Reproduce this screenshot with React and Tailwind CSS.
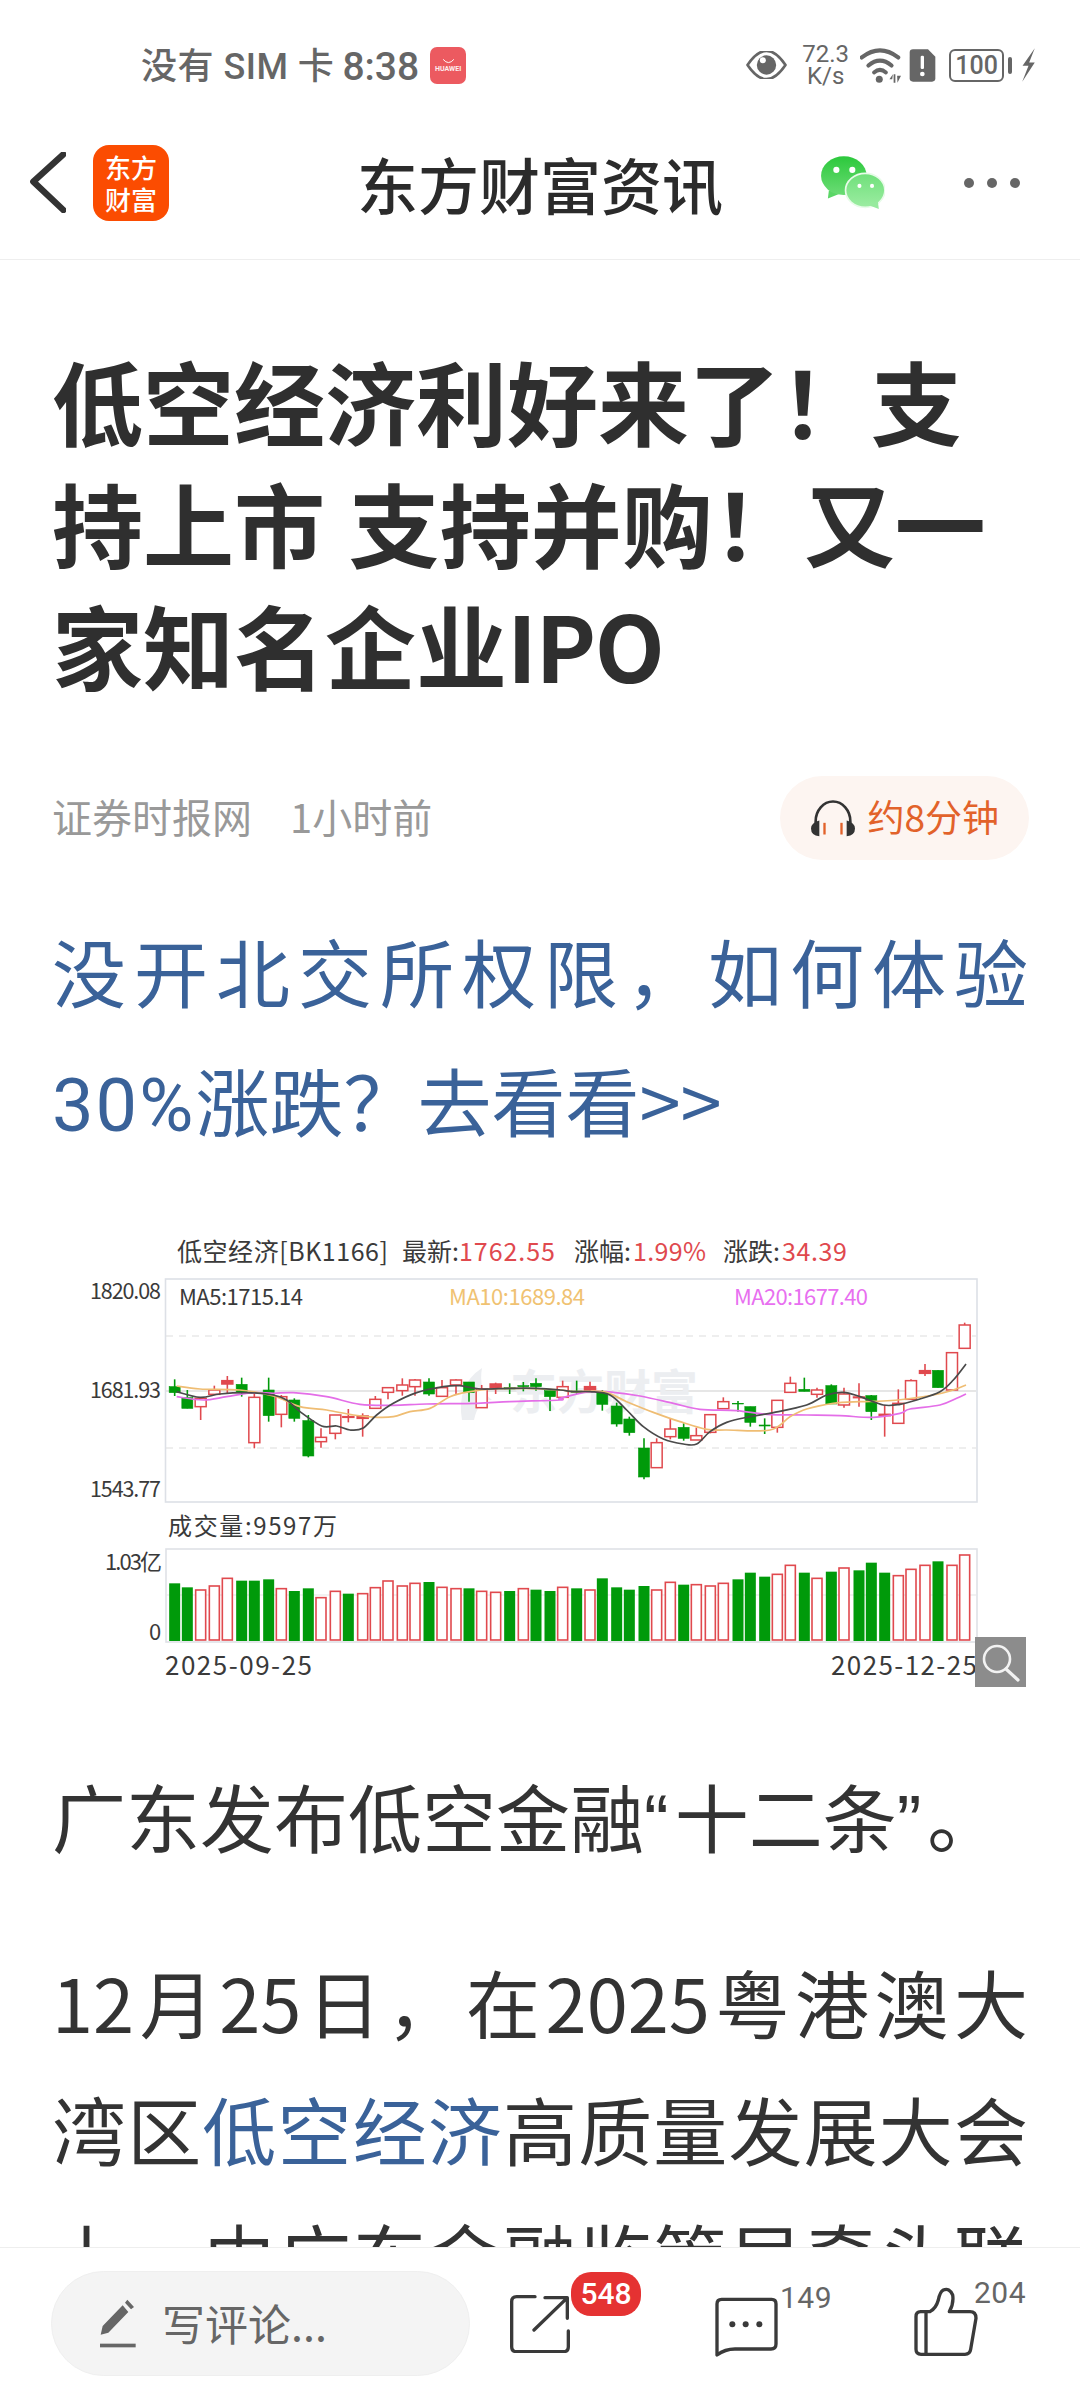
import React from "react";

const CJK = { fontFamily: '"Noto Sans CJK SC", sans-serif' };
const UI = '"Roboto", "Noto Sans CJK SC", sans-serif';
const BANG = "\uFF01";
const COMMA = "\uFF0C";
const QM = "\uFF1F";

// candle data in zoom-crop pixels: [x, bodyTop, bodyBottom, wickTop, wickBottom, colour]
const left = [
  [344,500,518,478,528,"g"],[382,533,565,510,565,"g"],[422,535,560,535,600,"r"],[463,510,523,497,523,"r"],[502,482,492,468,520,"r"],
  [545,493,517,473,530,"g"],[583,532,668,520,685,"r"],[626,510,587,473,605,"g"],[664,530,583,525,622,"r"],[703,540,595,535,605,"g"],
  [745,602,708,585,712,"g"],[783,652,665,625,683,"r"],[826,585,640,585,658,"r"],[865,590,592,567,607,"r"],[908,588,595,580,650,"r"],
  [946,538,565,528,565,"r"],[984,503,517,503,538,"r"],[1027,495,512,475,527,"r"],[1065,480,500,477,527,"r"],[1107,486,522,475,527,"g"],
  [1146,503,529,480,529,"r"],[1188,480,495,478,525,"r"],[1227,486,518,486,545,"g"],[1265,507,563,495,563,"r"],[1307,492,503,488,522,"r"],
  [1349,503,507,490,522,"g"],[1390,497,500,486,514,"g"],[1428,490,500,475,512,"g"],[1470,512,530,512,573,"g"],[1508,500,532,482,540,"r"],
];
const right = [
  [110,513,517,482,522,"g"],[150,500,510,485,515,"r"],[187,515,553,510,572,"g"],[230,558,612,548,620,"g"],[268,597,638,590,647,"g"],
  [312,684,771,655,778,"g"],[350,668,743,655,743,"r"],[391,627,650,597,658,"r"],[431,622,655,610,662,"g"],[469,647,660,623,660,"r"],
  [511,584,637,584,640,"r"],[550,545,566,532,566,"r"],[594,550,552,543,575,"g"],[631,560,607,560,620,"g"],[674,615,618,595,642,"g"],
  [712,541,622,541,638,"r"],[751,490,517,470,517,"r"],[793,508,514,473,514,"g"],[831,510,523,503,533,"r"],[874,497,552,493,552,"g"],
  [912,522,555,503,563,"r"],[957,531,533,490,560,"r"],[994,527,575,525,600,"g"],[1034,583,587,555,650,"r"],[1075,550,610,508,610,"r"],
  [1113,482,538,478,538,"r"],[1155,452,460,432,468,"r"],[1194,451,503,451,503,"g"],[1236,398,510,398,510,"r"],[1274,315,385,308,385,"r"],
];
const candles = [
  ...left.map((c) => [60 + c[0] / 3, ...c.slice(1)]),
  ...right.map((c) => [540 + c[0] / 3, ...c.slice(1)]),
];
const Y = (v) => 1220 + v / 3;

const vols = [
  [190,"g"],[202,"g"],[210,"r"],[198,"r"],[175,"r"],[182,"g"],[182,"g"],[178,"g"],[206,"r"],[213,"g"],
  [205,"g"],[233,"r"],[214,"r"],[221,"g"],[221,"r"],[203,"r"],[183,"r"],[198,"r"],[190,"r"],[186,"g"],
  [202,"r"],[206,"r"],[205,"g"],[214,"r"],[217,"r"],[213,"g"],[206,"r"],[209,"g"],[213,"g"],[202,"r"],
  [205,"g"],[210,"r"],[175,"g"],[202,"g"],[209,"g"],[198,"g"],[210,"r"],[187,"r"],[194,"g"],[194,"r"],
  [198,"r"],[190,"r"],[178,"g"],[158,"g"],[170,"g"],[163,"r"],[136,"r"],[158,"g"],[175,"r"],[155,"g"],
  [144,"r"],[151,"g"],[128,"g"],[158,"g"],[167,"r"],[148,"r"],[136,"r"],[124,"g"],[136,"r"],[105,"r"],
];

const L = (pts) => pts.map(([x, y]) => [60 + x / 3, Y(y)]);
const R = (pts) => pts.map(([x, y]) => [540 + x / 3, Y(y)]);
const ma5 = [...L([[350,515],[420,532],[480,522],[560,518],[640,525],[680,540],[720,575],[785,618],[830,618],[870,630],[908,625],[950,585],[1000,550],[1070,518],[1150,500],[1200,497],[1260,507],[1350,505],[1430,505],[1500,510]]),
  ...R([[100,515],[150,515],[210,525],[260,570],[310,620],[370,657],[430,672],[470,672],[510,635],[560,607],[630,590],[700,578],[800,555],[860,525],[910,517],[960,530],[1030,555],[1080,553],[1130,540],[1200,515],[1240,480],[1278,432]])];
const ma10 = [...L([[350,498],[420,507],[540,510],[640,528],[720,560],[800,570],[880,585],[950,592],[1000,590],[1050,575],[1110,565],[1170,530],[1230,515],[1300,507],[1400,505],[1500,510]]),
  ...R([[100,515],[190,515],[260,545],[340,577],[420,605],[500,628],[560,630],[690,630],[750,590],[800,567],[880,550],[960,545],[1030,543],[1100,537],[1180,525],[1230,513],[1278,495]])];
const ma20 = [...L([[350,530],[430,540],[500,530],[580,518],[640,520],[700,518],[800,530],[900,553],[1000,556],[1100,552],[1250,550],[1350,545],[1500,540]]),
  ...R([[60,535],[150,515],[220,517],[300,528],[400,550],[480,568],[590,572],[680,583],[800,585],[900,587],[1000,592],[1080,580],[1110,567],[1200,555],[1250,535],[1278,522]])];

function smooth(p) {
  let d = `M${p[0][0]} ${p[0][1]}`;
  for (let i = 0; i < p.length - 1; i++) {
    const a = p[Math.max(i - 1, 0)], b = p[i], c = p[i + 1], e = p[Math.min(i + 2, p.length - 1)];
    d += ` C${b[0] + (c[0] - a[0]) / 6} ${b[1] + (c[1] - a[1]) / 6} ${c[0] - (e[0] - b[0]) / 6} ${c[1] - (e[1] - b[1]) / 6} ${c[0]} ${c[1]}`;
  }
  return d;
}

const RED = "#e0494e";
const GREEN = "#009a0a";
const INK = "#3a3a3a";

function T({ x, y, c = INK, s = 24, w, children }) {
  return (
    <text x={x} y={y} fill={c} fontSize={s} textLength={w} lengthAdjust={w ? "spacing" : undefined} dominantBaseline="central" fontFamily='"Noto Sans CJK SC", sans-serif'>{children}</text>
  );
}

function Chart() {
  return (
    <svg className="block -mx-[52px] mt-[67px]" width="1080" height="460" viewBox="0 1230 1080 460">
      <T x={177} y={1250} s={25} w={211}>低空经济[BK1166]</T>
      <T x={402} y={1250} s={25}>最新:</T>
      <T x={459} y={1250} s={25} c={RED} w={96}>1762.55</T>
      <T x={574} y={1250} s={25}>涨幅:</T>
      <T x={633} y={1250} s={25} c={RED} w={73}>1.99%</T>
      <T x={723} y={1250} s={25}>涨跌:</T>
      <T x={782} y={1250} s={25} c={RED} w={65}>34.39</T>

      <rect x="165.5" y="1279" width="811.5" height="223" fill="#fff" stroke="#dde0e6" strokeWidth="1.6" />
      <line x1="166" x2="976" y1="1336" y2="1336" stroke="#dedede" strokeWidth="1.2" strokeDasharray="7 6" />
      <line x1="166" x2="976" y1="1448" y2="1448" stroke="#dedede" strokeWidth="1.2" strokeDasharray="7 6" />
      <line x1="166" x2="976" y1="1391" y2="1391" stroke="#dedede" strokeWidth="1.4" />

      <text x="510" y="1388" fill="#eceef1" fontSize="47" fontWeight="700" dominantBaseline="central" fontFamily='"Noto Sans CJK SC", sans-serif'>东方财富</text>
      <path d="M462 1420 Q456 1385 482 1368 Q478 1390 492 1400 Q478 1400 474 1420 Z" fill="#eceef1" />

      <T x={179} y={1295} s={22} w={124}>MA5:1715.14</T>
      <T x={449} y={1295} s={22} c="#f0c272" w={136}>MA10:1689.84</T>
      <T x={734} y={1295} s={22} c="#e86ff0" w={134}>MA20:1677.40</T>
      <T x={90} y={1289} s={21.5} w={71}>1820.08</T>
      <T x={90} y={1388} s={21.5} w={71}>1681.93</T>
      <T x={90} y={1487} s={21.5} w={71}>1543.77</T>

      {candles.map(([x, bt, bb, wt, wb, col], i) => {
        const c = col === "g" ? GREEN : RED;
        const thin = bb - bt < 12;
        return (
          <g key={i}>
            <line x1={x} x2={x} y1={Y(wt)} y2={Y(wb)} stroke={c} strokeWidth="1.6" />
            <rect x={x - 5.5} y={Y(bt)} width="11" height={(bb - bt) / 3} fill={col === "g" || thin ? c : "#fff"} stroke={c} strokeWidth={col === "g" ? 0.6 : 1.5} />
          </g>
        );
      })}
      <path d={smooth(ma20)} fill="none" stroke="#e46ee8" strokeWidth="1.7" />
      <path d={smooth(ma10)} fill="none" stroke="#efbd73" strokeWidth="1.7" />
      <path d={smooth(ma5)} fill="none" stroke="#4a4a4a" strokeWidth="1.7" />

      <T x={168} y={1524} s={24} w={169}>成交量:9597万</T>
      <rect x="166" y="1549" width="811" height="93" fill="#fff" stroke="#dfe1e6" strokeWidth="1.6" />
      <line x1="166" x2="976" y1="1595" y2="1595" stroke="#e6e6e6" strokeWidth="1.2" />
      {vols.map(([t, col], i) => {
        const x = candles[i][0];
        const top = 1520 + t / 3;
        return col === "g" ? (
          <rect key={i} x={x - 5.5} y={top} width="11" height={1641 - top} fill={GREEN} />
        ) : (
          <rect key={i} x={x - 5} y={top} width="10" height={1640 - top} fill="#fff" stroke={RED} strokeWidth="1.6" />
        );
      })}
      <T x={105} y={1560} s={22} w={57}>1.03亿</T>
      <T x={149} y={1630} s={22}>0</T>
      <T x={165} y={1663} s={26} w={147}>2025-09-25</T>
      <T x={831} y={1663} s={26} w={146}>2025-12-25</T>

      <rect x="975" y="1637" width="51" height="50" fill="#8c8c8c" />
      <circle cx="997" cy="1659" r="13" fill="none" stroke="#f2f2f2" strokeWidth="2.6" />
      <line x1="1006" y1="1669" x2="1018" y2="1680" stroke="#f2f2f2" strokeWidth="3.2" strokeLinecap="round" />
    </svg>
  );
}

function StatusBar() {
  return (
    <div className="h-[100px] flex items-center pl-[141px] pt-[30px] text-[#666]">
      <span className="text-[36px] leading-none font-medium tracking-[0.5px] mt-[4px]" style={{ fontFamily: UI }}>没有 SIM 卡</span>
      <span className="ml-[8px] text-[39px] leading-none font-medium mt-[4px]" style={{ fontFamily: UI }}>8:38</span>
      <div className="ml-[11px] w-[36px] h-[37px] rounded-[7px] bg-[#ec5a60] flex flex-col items-center justify-center">
        <svg width="15" height="7" viewBox="0 0 14 6" className="mb-[1px]"><path d="M2 1 Q7 7 12 1" fill="none" stroke="#fff" strokeWidth="0.9" /></svg>
        <span className="text-[7px] leading-none font-bold text-white/90" style={{ fontFamily: UI }}>HUAWEI</span>
      </div>
      <svg className="ml-[280px]" width="41" height="28" viewBox="595 155 120 84">
        <path d="M598 197 Q655 112 712 197 Q655 282 598 197 Z" fill="none" stroke="#666" strokeWidth="8" strokeLinejoin="round" />
        <circle cx="655" cy="197" r="29" fill="#666" />
        <circle cx="644" cy="183" r="9" fill="#fff" />
      </svg>
      <div className="ml-[16px] w-[45px] flex flex-col items-center text-[24px] leading-[22px]" style={{ fontFamily: UI }}>
        <span>72.3</span>
        <span>K/s</span>
      </div>
      <svg className="ml-[12px]" width="41" height="35" viewBox="928 143 117 100">
        <path d="M933 170 Q985 130 1037 170" fill="none" stroke="#666" strokeWidth="12" strokeLinecap="round" />
        <path d="M952 193 Q985 165 1018 193" fill="none" stroke="#666" strokeWidth="12" strokeLinecap="round" />
        <path d="M968 213 Q985 198 1002 213" fill="none" stroke="#666" strokeWidth="11" strokeLinecap="round" />
        <circle cx="983" cy="232" r="10" fill="#666" />
        <path d="M1020 232 L1012 232 L1022 218 Z M1024 218 H1029 V242 H1024 Z M1034 222 L1045 222 L1035 242 Z" fill="#666" />
      </svg>
      <svg className="ml-[8px]" width="27" height="33" viewBox="1069 144 79 99">
        <path d="M1070 155 Q1070 145 1080 145 H1125 L1147 167 V232 Q1147 242 1137 242 H1080 Q1070 242 1070 232 Z" fill="#666" />
        <rect x="1103" y="164" width="10" height="40" rx="4" fill="#fff" />
        <circle cx="1108" cy="219" r="7" fill="#fff" />
      </svg>
      <div className="ml-[13px] w-[55px] h-[33px] rounded-[6px] border-2 border-[#666] flex items-center justify-center text-[25px] leading-none font-medium" style={{ fontFamily: UI }}>100</div>
      <div className="ml-[4px] w-[4px] h-[17px] rounded-[2px] bg-[#666]" />
      <svg className="ml-[9px]" width="15" height="34" viewBox="1395 144 42 103">
        <path d="M1435 145 L1398 198 L1416 198 L1397 246 L1435 188 L1418 188 Z" fill="#666" />
      </svg>
    </div>
  );
}

function Header() {
  return (
    <div className="h-[160px] pt-[16px] grid grid-cols-[357px_366px_1fr] items-center border-b border-[#eeeeee]" style={CJK}>
      <div className="flex items-center pl-[30px] -mt-[10px]">
        <svg width="36" height="61" viewBox="90 69 108 183">
          <path d="M190 76 L100 158 L190 243" fill="none" stroke="#333" strokeWidth="19" strokeLinecap="round" strokeLinejoin="round" />
        </svg>
        <div className="ml-[27px] w-[76px] h-[76px] rounded-[16px] bg-[#fb4c01] flex flex-col items-center justify-center text-white text-[26px] leading-[32px] font-medium">
          <span>东方</span>
          <span>财富</span>
        </div>
      </div>
      <div className="text-[61px] leading-none font-medium text-[#2b2b2b] text-center whitespace-nowrap -mt-[8px]">东方财富资讯</div>
      <div className="flex items-center pl-[98px] -mt-[10px]">
        <svg width="64" height="53" viewBox="815 472 188 156">
          <defs>
            <linearGradient id="wa" x1="0" y1="0" x2="0" y2="1"><stop offset="0" stopColor="#2cc83c" /><stop offset="1" stopColor="#6bdc75" /></linearGradient>
            <linearGradient id="wb" x1="0" y1="0" x2="0" y2="1"><stop offset="0" stopColor="#6fe07a" /><stop offset="1" stopColor="#9ceca2" /></linearGradient>
          </defs>
          <path d="M838 573 L835 597 L868 584 Z" fill="#5ad666" />
          <ellipse cx="882" cy="530" rx="67" ry="57" fill="url(#wa)" />
          <circle cx="860" cy="513" r="9" fill="#fff" />
          <circle cx="907" cy="513" r="9" fill="#fff" />
          <ellipse cx="945" cy="573" rx="58" ry="50" fill="url(#wb)" stroke="#e8fbe9" strokeWidth="5" />
          <path d="M958 618 L985 628 L982 604 Z" fill="#97ea9e" />
          <circle cx="928" cy="560" r="6" fill="#fff" />
          <circle cx="965" cy="560" r="6" fill="#fff" />
        </svg>
        <div className="ml-[79px] flex gap-[13px]">
          <div className="w-[10px] h-[10px] rounded-full bg-[#666]" />
          <div className="w-[10px] h-[10px] rounded-full bg-[#666]" />
          <div className="w-[10px] h-[10px] rounded-full bg-[#666]" />
        </div>
      </div>
    </div>
  );
}

function Article() {
  return (
    <div className="flex-1 overflow-hidden px-[52px] pt-[78px]" style={CJK}>
      <h1 className="text-[91px] leading-[122px] font-bold text-[#2f2f2f] [word-spacing:3px]">
        低空经济利好来了{BANG}支持上市 支持并购{BANG}又一家知名企业<span className="tracking-[-1.5px]">IPO</span>
      </h1>
      <div className="mt-[72px] h-[84px] flex items-center justify-between">
        <div className="flex gap-[38px] text-[40px] text-[#999] -mt-[4px]">
          <span>证券时报网</span>
          <span>1小时前</span>
        </div>
        <div className="h-[84px] rounded-full bg-[#fdf5f1] flex items-center pl-[31px] pr-[30px] gap-[12px] -mr-[1px]">
          <svg width="44" height="37" viewBox="333 122 132 110">
            <path d="M347 200 V185 A52 59 0 0 1 451 185 V200" fill="none" stroke="#333" strokeWidth="8" />
            <path d="M358 183 Q333 190 333 207 Q333 228 358 230 Z M440 183 Q465 190 465 207 Q465 228 440 230 Z" fill="#333" />
            <rect x="370" y="190" width="7" height="35" fill="#e2622a" />
            <rect x="421" y="190" width="7" height="35" fill="#e2622a" />
          </svg>
          <span className="text-[37px] text-[#e2622a] leading-none -mt-[4px]">约8分钟</span>
        </div>
      </div>
      <p className="mt-[45px] text-[74px] leading-[129px] text-[#3a6299] text-justify">
        没开北交所权限{COMMA}如何体验<span className="font-['Roboto'] leading-none tracking-[2px]">30%</span>涨跌{QM}去看看&gt;&gt;
      </p>
      <Chart />
      <p className="mt-[61px] text-[74px] leading-[128px] text-[#333] text-justify">
        广东发布低空金融<span className="font-['Liberation_Sans'] leading-none tracking-[6px]">“</span>十二条<span className="font-['Liberation_Sans'] leading-none tracking-[6px]">”</span>。
      </p>
      <p className="mt-[58px] text-[74px] leading-[127px] text-[#333] text-justify">
        12月25日{COMMA}在2025粤港澳大湾区<span className="text-[#3a6299]">低空经济</span>高质量发展大会上{COMMA}由广东金融监管局牵头联合发布
      </p>
    </div>
  );
}

function BottomBar() {
  return (
    <div className="h-[153px] shrink-0 bg-white border-t border-[#eeeeee] flex items-start pl-[51px] pt-[23px]" style={CJK}>
      <div className="w-[419px] h-[105px] rounded-full bg-[#f4f4f4] border border-[#efefef] flex items-center pl-[47px]">
        <svg width="37" height="49" viewBox="177 141 111 147">
          <path d="M182 248 L188 222 L248 160 L265 180 L205 242 Z M255 152 L262 143 L282 165 L273 172 Z" fill="#666" />
          <rect x="180" y="275" width="107" height="11" fill="#666" />
        </svg>
        <span className="ml-[26px] text-[43px] leading-none text-[#666] -mt-[3px]">写评论...</span>
      </div>
      <div className="relative ml-[40px] mt-[24px]">
        <svg className="block" width="60" height="58" viewBox="60 135 180 174">
          <path d="M135 140 H80 Q65 140 65 155 V290 Q65 305 80 305 H220 Q235 305 235 290 V243 M165 143 H232 V205 M230 145 L132 240" fill="none" stroke="#3a3a3a" strokeWidth="10" strokeLinecap="round" strokeLinejoin="round" />
        </svg>
        <div className="absolute left-[61px] -top-[23px] w-[70px] h-[44px] rounded-[20px] bg-[#e53232] flex items-center justify-center text-white text-[30px] leading-none font-medium" style={{ fontFamily: UI }}>548</div>
      </div>
      <div className="relative ml-[144px] mt-[26px]">
        <svg className="block" width="64" height="60" viewBox="672 141 192 180">
          <path d="M681 315 V162 Q681 148 695 148 H845 Q858 148 858 162 V282 Q858 297 843 297 H735 Q705 297 681 315 Z" fill="none" stroke="#3a3a3a" strokeWidth="10" strokeLinejoin="round" />
          <circle cx="727" cy="223" r="9" fill="#3a3a3a" />
          <circle cx="767" cy="223" r="9" fill="#3a3a3a" />
          <circle cx="808" cy="223" r="9" fill="#3a3a3a" />
        </svg>
        <span className="absolute left-[66px] -top-[14px] text-[30px] leading-none text-[#666] tracking-[0.5px]" style={{ fontFamily: UI }}>149</span>
      </div>
      <div className="relative ml-[136px] mt-[16px]">
        <svg className="block" width="64" height="69" viewBox="1272 111 192 207">
          <path d="M1320 185 H1292 Q1278 185 1278 200 V298 Q1278 313 1293 313 H1425 Q1440 313 1442 298 L1458 205 Q1458 185 1440 185 H1378 Q1392 160 1388 135 Q1378 112 1360 120 Q1350 125 1345 150 Q1338 175 1320 185 Z M1308 188 V310" fill="none" stroke="#3a3a3a" strokeWidth="10" strokeLinejoin="round" />
        </svg>
        <span className="absolute left-[60px] -top-[9px] text-[30px] leading-none text-[#666] tracking-[0.5px]" style={{ fontFamily: UI }}>204</span>
      </div>
    </div>
  );
}

export default function App() {
  return (
    <div className="w-[1080px] h-[2400px] bg-white flex flex-col overflow-hidden">
      <StatusBar />
      <Header />
      <Article />
      <BottomBar />
    </div>
  );
}
